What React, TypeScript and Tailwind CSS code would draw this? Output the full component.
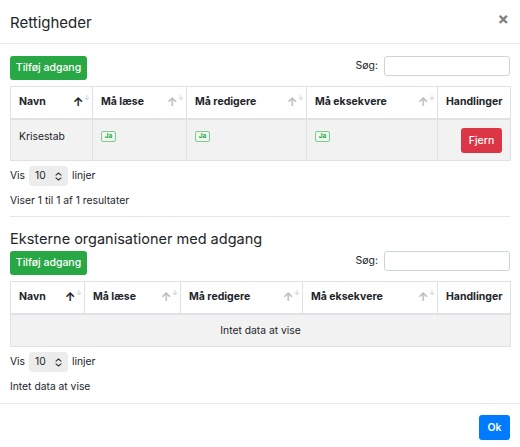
import { ReactNode } from "react";

const font = { fontFamily: "Inter, 'Noto Sans', sans-serif" };

const SortIcon = ({ active }: { active?: boolean }) => (
    <span className="absolute right-[2px] top-[9px] flex items-start leading-none">
        <span className={active ? "text-[12px] font-bold text-[#212529]" : "text-[12px] text-[#212529] opacity-30"}>↑</span>
        <span className="text-[7px] text-[#212529] opacity-20 -mt-[1px]">↓</span>
    </span>
);

const Badge = () => (
    <div className="flex items-center justify-center w-[15px] h-[11px] rounded-[2px] border border-[#7fcb8e] bg-[#eef8f0] text-[6.5px] font-bold text-[#28a745] leading-none">
        Ja
    </div>
);

const Th = ({ children, sortable, active, w }: { children: ReactNode; sortable?: boolean; active?: boolean; w: string }) => (
    <th className={`relative ${w} h-[32px] border border-[#dee2e6] border-b-2 px-[8px] text-left align-middle text-[10.5px] font-bold text-[#212529]`}>
        {children}
        {sortable && <SortIcon active={active} />}
    </th>
);

const Toolbar = () => (
    <div className="flex items-start justify-between">
        <button className="h-[24px] w-[77px] rounded-[3px] bg-[#28a745] text-[10.5px] font-medium text-white">
            Tilføj adgang
        </button>
        <div className="flex items-center gap-[6px]">
            <span className="text-[10.5px] text-[#212529]">Søg:</span>
            <div className="h-[20px] w-[126px] rounded-[3px] border border-[#ced4da] bg-white" />
        </div>
    </div>
);

const Pager = () => (
    <div className="flex items-center gap-[4px] text-[10.3px] text-[#212529]">
        <span>Vis</span>
        <div className="flex h-[20px] w-[39px] items-center justify-between rounded-[4px] bg-[#ececec] pl-[6px] pr-[6px]">
            <span>10</span>
            <svg width="7" height="9" viewBox="0 0 7 9" fill="none" stroke="#333" strokeWidth="1.1" strokeLinecap="round" strokeLinejoin="round">
                <path d="M1 3.2 L3.5 1 L6 3.2" />
                <path d="M1 5.8 L3.5 8 L6 5.8" />
            </svg>
        </div>
        <span>linjer</span>
    </div>
);

const cols1 = ["w-[82px]", "w-[94px]", "w-[120px]", "w-[131px]", "w-[73px]"];
const cols2 = ["w-[74px]", "w-[96px]", "w-[122px]", "w-[135px]", "w-[73px]"];

const Head = ({ cols }: { cols: string[] }) => (
    <thead>
        <tr>
            <Th w={cols[0]} sortable active>Navn</Th>
            <Th w={cols[1]} sortable>Må læse</Th>
            <Th w={cols[2]} sortable>Må redigere</Th>
            <Th w={cols[3]} sortable>Må eksekvere</Th>
            <Th w={cols[4]}>Handlinger</Th>
        </tr>
    </thead>
);

export default function App() {
    return (
        <div className="w-[520px] h-[447px] bg-white overflow-hidden text-[#212529]" style={font}>
            <div className="flex h-[44px] items-center justify-between border-b border-[#e9ecef] px-[10px]">
                <h4 className="text-[15px] leading-none pt-[1px]">Rettigheder</h4>
                <span className="text-[17px] font-bold text-[#808080] leading-none pr-[1px] -mt-[4px]">×</span>
            </div>

            <div className="px-[10px] pt-[12px]">
                <Toolbar />
                <table className="mt-[6px] w-[500px] table-fixed border-collapse">
                    <Head cols={cols1} />
                    <tbody>
                        <tr className="bg-[#f2f2f2] h-[42px]">
                            <td className="border border-[#dee2e6] px-[8px] pt-[9px] align-top text-[10.3px] leading-[14px]">Krisestab</td>
                            <td className="border border-[#dee2e6] px-[8px] pt-[11px] align-top"><Badge /></td>
                            <td className="border border-[#dee2e6] px-[8px] pt-[11px] align-top"><Badge /></td>
                            <td className="border border-[#dee2e6] px-[8px] pt-[11px] align-top"><Badge /></td>
                            <td className="border border-[#dee2e6] px-[8px] align-middle text-right">
                                <button className="h-[25px] w-[41px] rounded-[3px] bg-[#dc3545] text-[10.5px] font-medium text-white">
                                    Fjern
                                </button>
                            </td>
                        </tr>
                    </tbody>
                </table>
                <div className="mt-[5px]">
                    <Pager />
                </div>
                <p className="mt-[7px] text-[10.3px] leading-[14px]">Viser 1 til 1 af 1 resultater</p>
                <div className="mt-[9px] border-t border-[#e5e5e5]" />

                <h4 className="mt-[12px] text-[14.5px] leading-[19px]">Eksterne organisationer med adgang</h4>
                <div className="mt-[3px]">
                    <Toolbar />
                </div>
                <table className="mt-[6px] w-[500px] table-fixed border-collapse">
                    <Head cols={cols2} />
                    <tbody>
                        <tr className="bg-[#f2f2f2] h-[33px]">
                            <td colSpan={5} className="border border-[#dee2e6] text-center align-middle text-[10.3px]">
                                Intet data at vise
                            </td>
                        </tr>
                    </tbody>
                </table>
                <div className="mt-[5px]">
                    <Pager />
                </div>
                <p className="mt-[7px] text-[10.3px] leading-[14px]">Intet data at vise</p>
            </div>

            <div className="mt-[10px] flex justify-end border-t border-[#e9ecef] px-[10px] pt-[11px]">
                <button className="h-[25px] w-[31px] rounded-[3px] bg-[#007bff] text-[10.5px] font-semibold text-white">
                    Ok
                </button>
            </div>
        </div>
    );
}
